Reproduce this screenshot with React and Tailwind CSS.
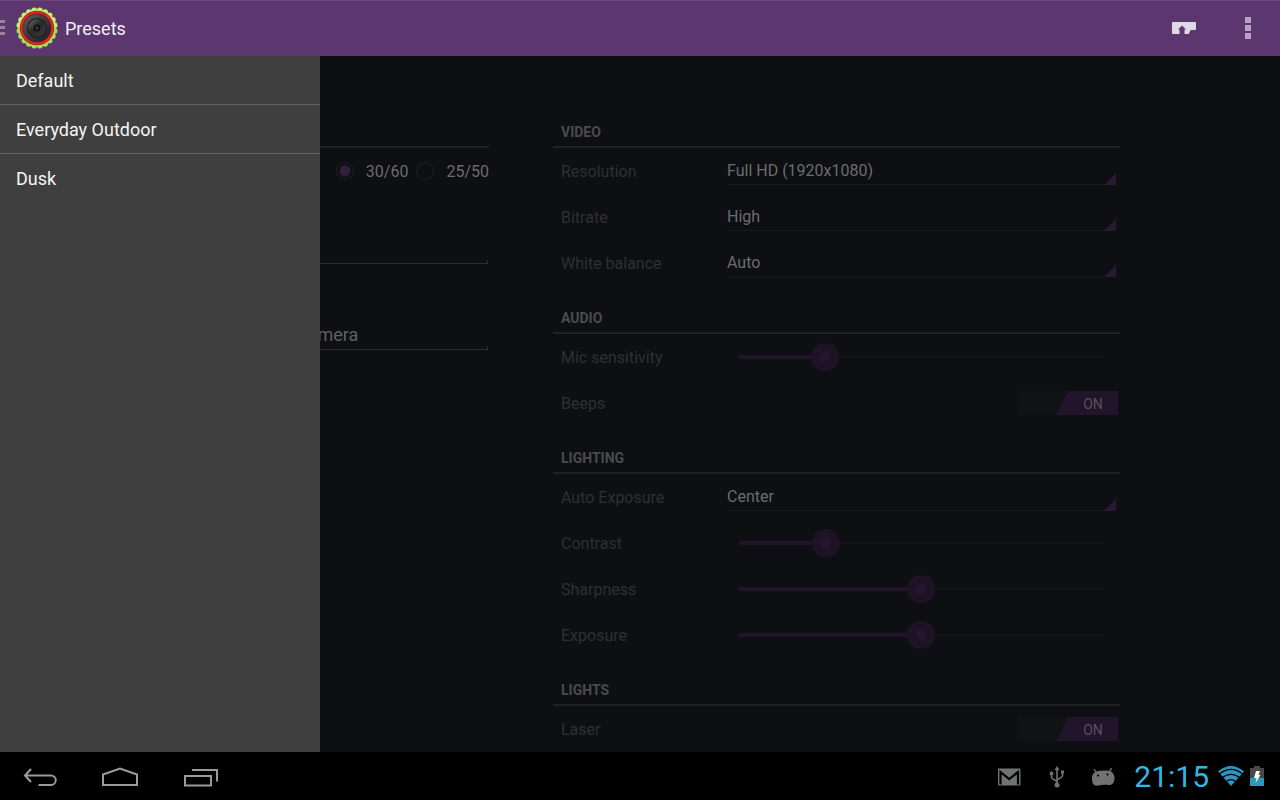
import React, { useState } from "react";

const TEETH = Array.from({ length: 20 }, (_, i) => {
  const a = ((i * 18 + 9) * Math.PI) / 180;
  return [21 + 17.8 * Math.cos(a), 21 + 17.8 * Math.sin(a)];
});

function Logo() {
  return (
    <svg viewBox="0 0 42 42" className="size-[42px] shrink-0" aria-hidden="true">
      <defs>
        <linearGradient id="ring" x1="0" y1="0" x2="1" y2="1">
          <stop offset="0" stopColor="#5c5c5c" />
          <stop offset="0.5" stopColor="#3a3a3a" />
          <stop offset="1" stopColor="#1d1d1d" />
        </linearGradient>
        <linearGradient id="lens" x1="0" y1="0" x2="1" y2="1">
          <stop offset="0" stopColor="#6e6e6e" />
          <stop offset="0.45" stopColor="#2a2a2a" />
          <stop offset="1" stopColor="#3c3c3c" />
        </linearGradient>
      </defs>
      <circle cx="21" cy="21" r="18.6" fill="#b5e35c" />
      {TEETH.map(([x, y], i) => (
        <circle key={i} cx={x} cy={y} r="2.9" fill={y < 21 ? "#c6ec74" : "#a9dc4e"} />
      ))}
      <circle cx="21" cy="21" r="17.2" fill="#86301c" />
      <circle cx="21" cy="21" r="16.6" fill="#e3262b" />
      <circle cx="21" cy="21" r="14.4" fill="#6b1a1a" />
      <circle cx="21" cy="21" r="13.8" fill="url(#ring)" />
      <circle cx="21" cy="21" r="10" fill="#1b1b1b" />
      <circle cx="21" cy="21" r="9" fill="url(#lens)" />
      <circle cx="21" cy="21" r="3.4" fill="#0c0c0c" />
      <circle cx="21" cy="21" r="1.8" fill="#4a4a4a" />
      <circle cx="21" cy="21" r="0.8" fill="#0c0c0c" />
    </svg>
  );
}

function SectionHeader({ children }) {
  return (
    <h2 className="flex h-12 items-end border-b-2 border-[#1f2122] pb-1 pl-2 text-sm leading-5 font-bold text-[#4a4b4e]">
      {children}
    </h2>
  );
}

function Row({ id, label, children }) {
  return (
    <div className="flex h-[46px] items-center pr-0.5 pl-2">
      <label htmlFor={id} className="w-[164px] shrink-0 pt-0.5 text-base text-[#2e3033]">
        {label}
      </label>
      <div className="flex min-w-0 flex-1 justify-end">{children}</div>
    </div>
  );
}

function SelectRow({ id, label, value }) {
  return (
    <Row id={id} label={label}>
      <div className="relative mx-0.5 flex-1">
        <select
          id={id}
          className="block h-7 w-full appearance-none border-b border-[#1b1721] bg-transparent text-base leading-6 text-[#6b6c6f] outline-none"
        >
          <option>{value}</option>
        </select>
        <svg viewBox="0 0 12 12" className="pointer-events-none absolute right-0 bottom-0 size-3" aria-hidden="true">
          <path d="M12 0V12H0Z" fill="#291932" />
        </svg>
      </div>
    </Row>
  );
}

function SliderRow({ id, label, initial }) {
  const [value, setValue] = useState(initial);
  return (
    <Row id={id} label={label}>
      <div className="grid flex-1 items-center">
        <div className="col-start-1 row-start-1 mx-3.5 h-0.5 bg-[#141517]" />
        <div className="col-start-1 row-start-1 mx-3.5">
          <div className="h-1 rounded-full bg-[#23142b]" style={{ width: `${value / 10}%` }} />
        </div>
        <input
          id={id}
          type="range"
          min="0"
          max="1000"
          value={value}
          onChange={(e) => setValue(Number(e.target.value))}
          className="col-start-1 row-start-1 m-0 h-7 w-full appearance-none bg-transparent outline-none [&::-webkit-slider-thumb]:size-7 [&::-webkit-slider-thumb]:appearance-none [&::-webkit-slider-thumb]:rounded-full [&::-webkit-slider-thumb]:bg-[radial-gradient(circle,#2a1633_0,#281530_3px,#1d1324_7px,#1d1324_100%)]"
        />
      </div>
    </Row>
  );
}

function SwitchRow({ id, label }) {
  const [on, setOn] = useState(true);
  return (
    <Row id={id} label={label}>
      <button
        id={id}
        type="button"
        role="switch"
        aria-checked={on}
        onClick={() => setOn(!on)}
        className={`flex h-6 w-[100px] bg-[#111213] ${on ? "justify-end" : "justify-start"}`}
      >
        <span className="flex h-6 w-[62px] items-center justify-center bg-[#22142a] pt-0.5 pl-3 text-sm text-[#57505c] [clip-path:polygon(12px_0,100%_0,100%_100%,0_100%)]">
          {on ? "ON" : "OFF"}
        </span>
      </button>
    </Row>
  );
}

function Radio({ id, label, defaultChecked }) {
  return (
    <div className="flex items-center gap-3">
      <input
        id={id}
        type="radio"
        name="rate"
        defaultChecked={defaultChecked}
        className="m-0 size-[18px] appearance-none rounded-full border border-[#1f2022] checked:bg-[radial-gradient(circle,#35203e_0,#301d38_5px,transparent_6px)]"
      />
      <label htmlFor={id} className="pt-0.5 text-base text-[#6b6c6f]">
        {label}
      </label>
    </div>
  );
}

function TextField({ label, defaultValue }) {
  return (
    <div className="relative mr-px">
      <input
        type="text"
        aria-label={label}
        defaultValue={defaultValue}
        className="block h-10 w-full border-b border-[#2c2d30] bg-transparent pt-2.5 pl-[136px] text-lg leading-6 text-[#5f6063] outline-none"
      />
      <span className="absolute right-0 bottom-0 h-1 w-px bg-[#2c2d30]" />
    </div>
  );
}

function NavButton({ label, children }) {
  return (
    <button type="button" aria-label={label} className="flex h-12 w-20 items-center justify-center">
      <svg viewBox="0 0 40 24" className="h-6 w-10" fill="none" stroke="#9b9b9b" strokeWidth="2" aria-hidden="true">
        {children}
      </svg>
    </button>
  );
}

export default function App() {
  return (
    <div className="flex h-screen flex-col overflow-hidden bg-[#0d0f12] font-[Roboto,sans-serif]">
      <header className="flex h-14 shrink-0 items-center bg-[#5c376f] shadow-[inset_0_1px_0_#694779]">
        <button type="button" className="flex items-center text-lg text-[#f3eff5]">
          <svg viewBox="0 0 5 16" className="mr-[11px] h-4 w-[5px]" fill="#94859a" aria-hidden="true">
            <path d="M0 0h5v3H0zM0 6h5v3H0zM0 12h5v3H0z" />
          </svg>
          <Logo />
          <span className="pt-0.5 pl-[7px]">Presets</span>
        </button>
        <div className="ml-auto flex">
          <button type="button" aria-label="Upload settings" className="flex h-14 w-16 items-center justify-center">
            <svg viewBox="0 0 24 12" className="h-3 w-6" fill="#e0d9e5" aria-hidden="true">
              <path d="M1 0H23Q24 0 24 1V7Q24 8 23 8H19.500Q18.500 8 18 9L16.800 12H12.500V7.500H14L10 3.500L6 7.500H7.500V12H1Q0 12 0 11V1Q0 0 1 0Z" />
            </svg>
          </button>
          <button type="button" aria-label="More options" className="flex h-14 w-16 items-center justify-center">
            <svg viewBox="0 0 6 22" className="h-[22px] w-1.5" fill="#b7a4c0" aria-hidden="true">
              <path d="M0 0h6v6H0zM0 8h6v6H0zM0 16h6v6H0z" />
            </svg>
          </button>
        </div>
      </header>

      <div className="relative min-h-0 flex-1 overflow-hidden">
        <main className="grid grid-cols-[329fr_567fr] gap-16 px-40 pt-11">
          <section>
            <div className="h-12 border-b-2 border-[#1f2122]" />
            <div className="flex h-[46px] items-center justify-end gap-2">
              <Radio id="rate-30" label="30/60" defaultChecked />
              <Radio id="rate-25" label="25/50" />
            </div>
            <div className="flex flex-col gap-[46px] pt-[30px]">
              <TextField label="Title" defaultValue="" />
              <TextField label="Name" defaultValue="Camera" />
            </div>
          </section>
          <section>
            <SectionHeader>VIDEO</SectionHeader>
            <SelectRow id="resolution" label="Resolution" value="Full HD (1920x1080)" />
            <SelectRow id="bitrate" label="Bitrate" value="High" />
            <SelectRow id="white-balance" label="White balance" value="Auto" />
            <SectionHeader>AUDIO</SectionHeader>
            <SliderRow id="mic" label="Mic sensitivity" initial={236} />
            <SwitchRow id="beeps" label="Beeps" />
            <SectionHeader>LIGHTING</SectionHeader>
            <SelectRow id="auto-exposure" label="Auto Exposure" value="Center" />
            <SliderRow id="contrast" label="Contrast" initial={238} />
            <SliderRow id="sharpness" label="Sharpness" initial={498} />
            <SliderRow id="exposure" label="Exposure" initial={498} />
            <SectionHeader>LIGHTS</SectionHeader>
            <SwitchRow id="laser" label="Laser" />
          </section>
        </main>

        <nav aria-label="Presets" className="absolute inset-y-0 left-0 w-80 bg-[#3f3f3f]">
          <ul className="divide-y divide-[#636363]">
            {["Default", "Everyday Outdoor", "Dusk"].map((name) => (
              <li key={name}>
                <a href="#" className="flex h-12 items-center px-4 pt-0.5 text-lg text-[#f5f5f5]">
                  {name}
                </a>
              </li>
            ))}
          </ul>
        </nav>
      </div>

      <footer className="flex h-12 shrink-0 items-center bg-black pr-4">
        <NavButton label="Back">
          <path d="M11 5L5 11.500L11 18M5.500 11.500H31A4.750 4.750 0 0 1 31 21H18.500" />
        </NavButton>
        <NavButton label="Home">
          <path d="M3 21V10.500L20 4.500L37 10.500V21Z" />
        </NavButton>
        <NavButton label="Recent apps">
          <path d="M5 12H31V21.500H5ZM12 6H37V17.500" />
        </NavButton>
        <div className="ml-auto flex items-center pt-0.5">
          <svg viewBox="0 0 24 18" className="mr-7 h-[18px] w-6" aria-hidden="true">
            <path d="M1 0.500H23.500V17.500H1Z" fill="#707372" />
            <path d="M3.500 16.500V4L12.200 11L21 4V16.500" fill="none" stroke="#000" strokeWidth="2.200" />
          </svg>
          <svg viewBox="0 0 16 22" className="mr-[26px] h-[22px] w-4" fill="none" stroke="#707372" strokeWidth="1.600" aria-hidden="true">
            <path d="M8 3V19M2.500 7.500V11Q2.500 12 3.500 12.600L8 15.500M13.500 6V9.500Q13.500 10.500 12.500 11.200L8 14" />
            <path d="M8 0L10.500 4H5.500ZM12 4.500H15V7.500H12Z" fill="#707372" stroke="none" />
            <circle cx="2.500" cy="7.500" r="1.900" fill="#707372" stroke="none" />
            <circle cx="8" cy="19" r="2.500" fill="#707372" stroke="none" />
          </svg>
          <svg viewBox="0 0 24 18" className="mr-[19px] h-[18px] w-6" fill="#707372" aria-hidden="true">
            <path d="M3 1L5.500 5M20.500 0L18.500 4" stroke="#707372" strokeWidth="1.400" />
            <path d="M1 11C0.500 6 4 3 9 2.800L15 2.400C20 2.200 23.300 5 23.500 9.500C23.600 13 22.500 16 20 16.700C17.500 17.400 15.500 16.600 12.500 16.800C9 17 7.500 18 4.500 17.600C1.800 17 1.200 14 1 11Z" />
            <circle cx="7" cy="7.500" r="1.100" fill="#000" />
            <circle cx="16.500" cy="6.500" r="1.100" fill="#000" />
          </svg>
          <time className="mr-2 text-3xl text-[#33b5e5]">21:15</time>
          <svg viewBox="0 0 28 20" className="mr-[5px] mb-0.5 h-5 w-7" aria-hidden="true">
            <path d="M14 20L1 5.500Q14 -5.500 27 5.500Z" fill="#2d95bf" />
            <path d="M2 8.300Q14 -1.500 26 8.300M5 12Q14 4.800 23 12M9 15.800Q14 11.600 19 15.800" fill="none" stroke="#000" strokeWidth="1.200" />
          </svg>
          <svg viewBox="0 0 14 20" className="mb-0.5 h-5 w-3.5" aria-hidden="true">
            <path d="M4 0H10V2H14V20H0V2H4Z" fill="#484848" />
            <path d="M0 12H14V20H0Z" fill="#3195bd" />
            <path d="M6 5H10L8.500 9H10.500L5.500 17L6.500 12H4Z" fill="#fff" />
          </svg>
        </div>
      </footer>
    </div>
  );
}
